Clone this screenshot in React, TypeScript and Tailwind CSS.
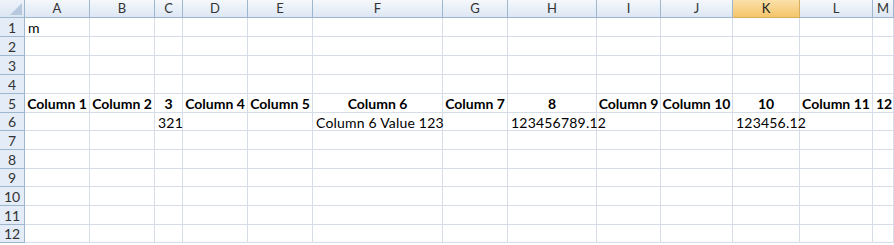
import React from "react";

const cols = ["A","B","C","D","E","F","G","H","I","J","K","L","M"];
const rowH = ["h-[19px]","h-[19px]","h-[19px]","h-[19px]","h-[19px]","h-[18px]","h-[19px]","h-[19px]","h-[18px]","h-[19px]","h-[19px]","h-[18px]"];

type Cell = { t: string; bold?: boolean; center?: boolean };
const data: Record<string, Cell> = {
  "1-0": { t: "m" },
  "5-0": { t: "Column 1", bold: true, center: true },
  "5-1": { t: "Column 2", bold: true, center: true },
  "5-2": { t: "3", bold: true, center: true },
  "5-3": { t: "Column 4", bold: true, center: true },
  "5-4": { t: "Column 5", bold: true, center: true },
  "5-5": { t: "Column 6", bold: true, center: true },
  "5-6": { t: "Column 7", bold: true, center: true },
  "5-7": { t: "8", bold: true, center: true },
  "5-8": { t: "Column 9", bold: true, center: true },
  "5-9": { t: "Column 10", bold: true, center: true },
  "5-10": { t: "10", bold: true, center: true },
  "5-11": { t: "Column 11", bold: true, center: true },
  "5-12": { t: "12", bold: true },
  "6-2": { t: "321" },
  "6-5": { t: "Column 6 Value 123" },
  "6-7": { t: "123456789.12" },
  "6-10": { t: "123456.12" },
};

export default function App() {
  return (
    <div className="w-[894px] h-[245px] overflow-hidden bg-white text-[14px] text-black font-['Lato','Open_Sans',sans-serif]">
      <div className="grid grid-cols-[25px_65px_65px_28px_65px_65px_130px_65px_89px_64px_72px_67px_73px_21px]">
        <div className="h-[18px] border-r border-b border-[#9eb6ce] bg-gradient-to-b from-[#eef3fa] to-[#dbe5f2] relative">
          <div className="absolute right-[2px] bottom-[2px] w-0 h-0 border-l-[12px] border-l-transparent border-b-[12px] border-b-[#b6c8dd]" />
        </div>
        {cols.map((c) => (
          <div
            key={c}
            className={
              c === "K"
                ? "h-[18px] flex items-center justify-center border-r border-b text-[13px] bg-gradient-to-b from-[#fbe0a8] to-[#f5c56a] border-[#d6ae5e] text-[#222]"
                : "h-[18px] flex items-center justify-center border-r border-b text-[13px] bg-gradient-to-b from-[#f5f8fc] to-[#dde7f3] border-[#9eb6ce] text-[#333]"
            }
          >
            {c}
          </div>
        ))}
        {rowH.map((h, r) => (
          <React.Fragment key={r}>
            <div className={`${h} flex items-center justify-center border-r border-b border-[#9eb6ce] bg-[#e4ecf7] text-[14px] text-[#333]`}>
              {r + 1}
            </div>
            {cols.map((c, i) => {
              const cell = data[`${r + 1}-${i}`];
              const align = cell?.center ? "justify-center" : "pl-[3px]";
              const weight = cell?.bold ? "font-bold" : "tracking-[0.2px]";
              return (
                <div
                  key={c}
                  className={`${h} ${align} ${weight} flex items-center pt-[1px] border-r border-b border-[#d6dce8] whitespace-nowrap`}
                >
                  {cell?.t}
                </div>
              );
            })}
          </React.Fragment>
        ))}
      </div>
    </div>
  );
}
